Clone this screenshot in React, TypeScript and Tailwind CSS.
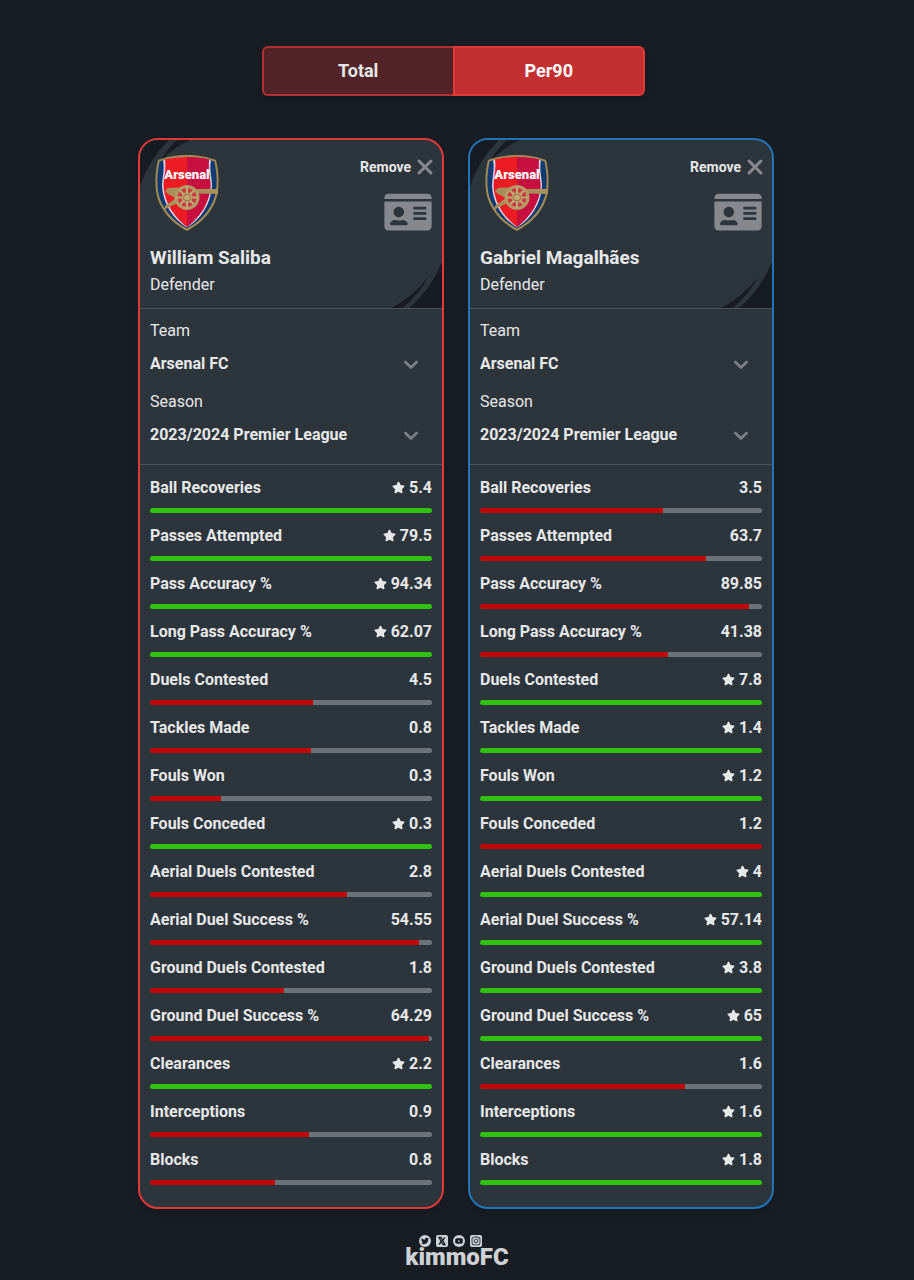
import React from 'react';
import { FaIdCard, FaStar, FaTwitter, FaYoutube, FaInstagram } from 'react-icons/fa';
import { X } from 'lucide-react';

type Player = {
  id: string;
  name: string;
  position: string;
  team: string;
  season: string;
};

type Stat = {
  label: string;
  values: [number, number];
  lowerIsBetter?: boolean;
};

const players: Player[] = [
  { id: 'saliba', name: 'William Saliba', position: 'Defender', team: 'Arsenal FC', season: '2023/2024 Premier League' },
  { id: 'gabriel', name: 'Gabriel Magalhães', position: 'Defender', team: 'Arsenal FC', season: '2023/2024 Premier League' },
];

const borders = ['border-[#e03a38]', 'border-[#1f74ba]'];

const stats: Stat[] = [
  { label: 'Ball Recoveries', values: [5.4, 3.5] },
  { label: 'Passes Attempted', values: [79.5, 63.7] },
  { label: 'Pass Accuracy %', values: [94.34, 89.85] },
  { label: 'Long Pass Accuracy %', values: [62.07, 41.38] },
  { label: 'Duels Contested', values: [4.5, 7.8] },
  { label: 'Tackles Made', values: [0.8, 1.4] },
  { label: 'Fouls Won', values: [0.3, 1.2] },
  { label: 'Fouls Conceded', values: [0.3, 1.2], lowerIsBetter: true },
  { label: 'Aerial Duels Contested', values: [2.8, 4] },
  { label: 'Aerial Duel Success %', values: [54.55, 57.14] },
  { label: 'Ground Duels Contested', values: [1.8, 3.8] },
  { label: 'Ground Duel Success %', values: [64.29, 65] },
  { label: 'Clearances', values: [2.2, 1.6] },
  { label: 'Interceptions', values: [0.9, 1.6] },
  { label: 'Blocks', values: [0.8, 1.8] },
];

const ArsenalCrest = () => (
  <svg className="h-[78px] w-[66px]" viewBox="0 0 66 78" role="img" aria-label="Arsenal">
    <path d="M33 1C44 1 54 3 62 6C64 14 65 23 64.500 32C63.500 53 50 68 33 77C16 68 2.500 53 1.500 32C1 23 2 14 4 6C12 3 22 1 33 1Z" fill="#a08a52" />
    <path d="M33 3C43 3 52 4.500 60.500 7.500C62 15 63 23 62.500 32C61.500 51 49 66 33 74.500C17 66 4.500 51 3.500 32C3 23 4 15 5.500 7.500C14 4.500 23 3 33 3Z" fill="#0f3a72" />
    <path d="M33 3C42 3 50 4 57 6.500C55 15 58 24 58 32C57 50 47 65 33 73.500C19 65 9 50 8 32C8 24 11 15 9 6.500C16 4 24 3 33 3Z" fill="#d9d5e6" />
    <path d="M33 3C42 3 49 4 55 5.500C53.500 15 56.500 24 56.500 32C55.500 49 46 63 33 73C20 63 10.500 49 9.500 32C9.500 24 12.500 15 11 5.500C17 4 24 3 33 3Z" fill="#ed1c24" />
    <path d="M33 3C42 3 49 4 55 5.500C53.500 15 56.500 24 56.500 32C55.500 49 46 63 33 73Z" fill="#c60f3f" />
    <path d="M14 34L24 33.500L43 35H62L64 34V40L45 39.500L36 43L26 48L13 54L10 57L11 52L22 44L14 40L11 37Z" fill="#a8905a" />
    <circle cx="33" cy="43.500" r="12.500" fill="#b39a66" />
    <circle cx="33" cy="43.500" r="7.500" fill="none" stroke="#c93a3f" strokeWidth="4" />
    <path d="M33 33V54M22.500 43.500H43.500M26 36.500L40 50.500M40 36.500L26 50.500" stroke="#c0a873" strokeWidth="2.200" />
    <circle cx="33" cy="43.500" r="3.500" fill="#c0a873" stroke="#a5553f" strokeWidth="0.800" />
    <text x="33" y="25" textAnchor="middle" fontFamily="Roboto, sans-serif" fontWeight="900" fontSize="13" fill="#ffffff">
      Arsenal
    </text>
  </svg>
);

const HeaderPattern = () => (
  <svg className="absolute inset-0 h-full w-full" viewBox="0 0 302 168" preserveAspectRatio="none" fill="#171c23" aria-hidden="true">
    <path d="M0 0H29Q10 18 0 46Z" />
    <path d="M37 0H50Q34 7 20 21Q27 9 37 0Z" />
    <path d="M302 168V122Q291 149 269 168Z" />
    <path d="M251 168H263Q279 154 289 136Q272 158 251 168Z" />
  </svg>
);

const ChevronIcon = () => (
  <svg className="pointer-events-none absolute top-0 right-[9px] h-6 w-6" viewBox="0 0 20 20" fill="#7b8186" aria-hidden="true">
    <path d="M4.516 7.548c0.436-0.446 1.043-0.481 1.576 0l3.908 3.747 3.908-3.747c0.533-0.481 1.141-0.446 1.574 0 0.436 0.445 0.408 1.197 0 1.615-0.406 0.418-4.695 4.502-4.695 4.502-0.217 0.223-0.502 0.335-0.787 0.335s-0.57-0.112-0.789-0.335c0 0-4.287-4.084-4.695-4.502s-0.436-1.17 0-1.615z" />
  </svg>
);

const SelectField = ({ id, label, value }: { id: string; label: string; value: string }) => (
  <div>
    <label htmlFor={id} className="block leading-6">{label}</label>
    <div className="relative mt-[9px]">
      <select id={id} defaultValue={value} className="block h-6 w-full appearance-none bg-transparent font-bold leading-6">
        <option>{value}</option>
      </select>
      <ChevronIcon />
    </div>
  </div>
);

const StatRow = ({ stat, index }: { stat: Stat; index: number }) => {
  const value = stat.values[index];
  const other = stat.values[1 - index];
  const best = stat.lowerIsBetter ? value < other : value > other;
  const width = best ? 100 : Math.min(100, (value / other) * 100);

  return (
    <li className="h-12">
      <div className="flex h-[26px] items-center justify-between font-bold">
        <span>{stat.label}</span>
        <span className="flex items-center gap-1">
          {best && <FaStar className="mb-0.5 h-[13px] w-[13px]" />}
          {value}
        </span>
      </div>
      <div className="mt-[7px] h-[5px] overflow-hidden rounded-sm bg-[#6c7378]">
        <div className={best ? 'h-full bg-[#31c212]' : 'h-full bg-[#c00808]'} style={{ width: `${width}%` }} />
      </div>
    </li>
  );
};

const PlayerCard = ({ player, index }: { player: Player; index: number }) => (
  <section className={`min-w-0 flex-1 overflow-hidden rounded-[20px] border-2 bg-[#2d353c] shadow-md ${borders[index]}`}>
    <header className="relative border-b border-[#4c5359]">
      <HeaderPattern />
      <div className="relative h-[168px] px-[10px] pt-[14px]">
        <div className="flex justify-between">
          <div className="pl-1">
            <ArsenalCrest />
          </div>
          <div className="flex flex-col items-end">
            <button type="button" className="flex h-[26px] items-center gap-0.5 text-[14px] font-bold">
              Remove
              <X className="-mr-[5px] h-6 w-6 text-[#85898d]" strokeWidth={3} />
            </button>
            <button type="button" aria-label="Player profile" className="mt-[11px] text-[#85888d]">
              <FaIdCard className="h-[42px] w-12" />
            </button>
          </div>
        </div>
        <h2 className="mt-[11px] text-[19px] font-bold leading-7">{player.name}</h2>
        <p className="leading-[26px]">{player.position}</p>
      </div>
    </header>
    <div className="flex h-[156px] flex-col gap-[14px] border-b border-[#4c5359] px-[10px] pt-[10px]">
      <SelectField id={`${player.id}-team`} label="Team" value={player.team} />
      <SelectField id={`${player.id}-season`} label="Season" value={player.season} />
    </div>
    <ul className="px-[10px] pt-[10px] pb-3">
      {stats.map((stat) => (
        <StatRow key={stat.label} stat={stat} index={index} />
      ))}
    </ul>
  </section>
);

const XLogo = () => (
  <svg className="h-3 w-3" viewBox="0 0 12 12" aria-hidden="true">
    <rect width="12" height="12" rx="2" fill="#cfd2d5" />
    <path d="M3 2.500H5L9 9.500H7Z" fill="none" stroke="#171c23" strokeWidth="1.300" />
    <path d="M8.800 2.500L3 9.500" stroke="#171c23" strokeWidth="1.300" />
  </svg>
);

const Footer = () => (
  <footer className="mt-[26px] flex flex-col items-center text-[#cfd2d5]">
    <div className="flex h-3 items-center gap-[5px] pr-[14px] text-[#171c23]">
      <span className="flex h-3 w-3 items-center justify-center rounded-full bg-[#cfd2d5]"><FaTwitter className="h-2 w-2" /></span>
      <XLogo />
      <span className="flex h-3 w-3 items-center justify-center rounded-full bg-[#cfd2d5]"><FaYoutube className="h-2 w-2" /></span>
      <span className="flex h-3 w-3 items-center justify-center rounded-xs bg-[#cfd2d5]"><FaInstagram className="h-2.5 w-2.5" /></span>
    </div>
    <p className="text-2xl font-black leading-5">kimmoFC</p>
  </footer>
);

export default function App() {
  return (
    <div className="min-h-screen bg-[#181d23] px-4 pt-[46px] pb-3 font-[Roboto,sans-serif] text-base text-[#e6e8ea]">
      <div className="flex justify-center pr-[7px]">
        <div className="flex h-[50px] w-full max-w-[383px] text-lg font-bold shadow-md" role="group" aria-label="Stat mode">
          <button type="button" aria-pressed="false" className="flex-1 rounded-l-md border-2 border-r-0 border-[#b32f34] bg-[#522427]">
            Total
          </button>
          <button type="button" aria-pressed="true" className="flex-1 rounded-r-md border-2 border-[#e03a38] bg-[#c32f31] text-white">
            Per90
          </button>
        </div>
      </div>
      <main className="mt-[42px] flex justify-center pr-0.5">
        <div className="flex w-full max-w-[636px] gap-6">
          {players.map((player, index) => (
            <PlayerCard key={player.id} player={player} index={index} />
          ))}
        </div>
      </main>
      <Footer />
    </div>
  );
}
